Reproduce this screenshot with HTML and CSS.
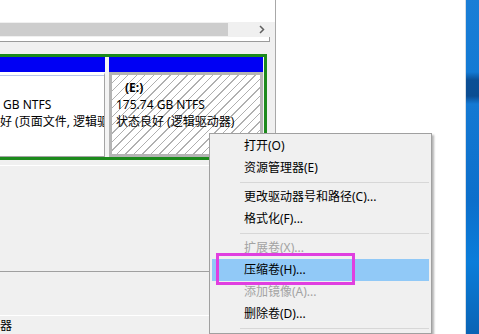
FILE: index.html
```html
<!DOCTYPE html>
<html lang="zh-CN">

<head>
    <meta charset="UTF-8">
    <title>磁盘管理</title>
    <link rel="stylesheet" href="styles.css">
</head>

<body>

    <div class="screen">
        <div class="window">
            <div class="list-area"></div>
            <div class="hscroll">
                <div class="thumb"></div>
                <svg class="arrow" width="6" height="9" viewBox="0 0 6 9">
                    <path d="M1 1 L4.5 4.5 L1 8" fill="none" stroke="#606060" stroke-width="1.5" />
                </svg>
            </div>
            <div class="pane-edge"></div>

            <div class="disk-row">
                <div class="extended">
                    <div class="part part-left">
                        <div class="part-head"></div>
                        <div class="part-body plain">
                            <p>&nbsp;</p>
                            <p class="shift">GB NTFS</p>
                            <p>好 (页面文件, 逻辑驱</p>
                        </div>
                    </div>
                    <div class="part part-right">
                        <div class="part-head"></div>
                        <div class="part-body hatched">
                            <p class="label">(E:)</p>
                            <p>175.74 GB NTFS</p>
                            <p>状态良好 (逻辑驱动器)</p>
                        </div>
                    </div>
                </div>
            </div>
            <div class="legend-top"></div>
            <div class="legend"></div>
            <div class="status">器</div>
        </div>
        <div class="blank"></div>
        <div class="desktop"></div>
    </div>

    <ul class="context-menu">
        <li class="item">打开(O)</li>
        <li class="item">资源管理器(E)</li>
        <li class="sep"></li>
        <li class="item">更改驱动器号和路径(C)...</li>
        <li class="item">格式化(F)...</li>
        <li class="sep"></li>
        <li class="item disabled">扩展卷(X)...</li>
        <li class="item hot">压缩卷(H)...</li>
        <li class="item disabled">添加镜像(A)...</li>
        <li class="item">删除卷(D)...</li>
        <li class="sep"></li>
    </ul>

    <div class="mark"></div>

</body>

</html>
```

FILE: styles.css
```css
body {
    margin: 0;
    width: 479px;
    height: 334px;
    overflow: hidden;
    position: relative;
    background: #fff;
    font: 12px/17px "Noto Sans", "Noto Sans CJK SC", sans-serif;
    color: #000;
}

p {
    margin: 0;
    white-space: nowrap;
}

.screen {
    display: flex;
    height: 334px;
}

/* disk management window */
.window {
    width: 276px;
    flex: none;
    box-sizing: border-box;
    border-right: 1px solid #a8a8a8;
    background: #f0f0f0;
    display: flex;
    flex-direction: column;
}

.list-area {
    height: 22px;
    background: #fff;
}

.hscroll {
    width: 270px;
    height: 15px;
    display: flex;
    align-items: center;
    background: #f0f0f0;
}

.thumb {
    width: 228px;
    height: 13px;
    background: #cdcdcd;
}

.arrow {
    margin-left: auto;
    margin-right: 5px;
}

.pane-edge {
    width: 270px;
    height: 5px;
    box-sizing: border-box;
    background: #fff;
    border-bottom: 1px solid #9a9a9a;
    border-right: 1px solid #9a9a9a;
}

.disk-row {
    padding: 12px 0 5px;
    border-bottom: 1px solid #fff;
}

.extended {
    display: flex;
    gap: 4px;
    width: 267px;
    height: 106px;
    box-sizing: border-box;
    border: 3px solid #1c8a1c;
    border-left: 0;
    padding-right: 1px;
    background: #f4f4f4;
}

.part {
    display: flex;
    flex-direction: column;
    overflow: hidden;
}

.part-left {
    width: 105px;
}

.part-right {
    width: 154px;
}

.part-head {
    height: 15px;
    background: #0000f4;
}

.part-body {
    flex: 1;
    overflow: hidden;
}

.plain {
    background: #fff;
    border-top: 3px solid #fff;
    border-right: 1px solid #a4a4a4;
    border-bottom: 1px solid #a4a4a4;
    box-shadow: inset 0 1px 0 #b9c6ea;
    padding-top: 4px;
}

.shift {
    padding-left: 3px;
}

.hatched {
    border: 3px solid #b4b4b4;
    padding: 4px 0 0 4px;
    background: repeating-linear-gradient(135deg, #fff 0 5px, #b0b0b0 5px 6px);
}

.label {
    font-weight: bold;
    padding-left: 9px;
}

.legend-top {
    height: 107px;
    border-bottom: 1px solid #a0a0a0;
}

.legend {
    height: 43px;
    border-bottom: 1px solid #fff;
}

.status {
    padding-top: 1px;
}

.blank {
    flex: 1;
    box-sizing: border-box;
    border-right: 1px solid #d6dce3;
}

.desktop {
    width: 13px;
    flex: none;
    background: linear-gradient(to bottom, #1a7ed6 0, #137ad4 72px, #0b4f95 80px, #0b4d92 96px, #1479d3 104px, #0c6fcb 200px, #0a7dda 262px, #0a63b4 334px);
}

/* context menu */
.context-menu {
    position: absolute;
    left: 209px;
    top: 133px;
    width: 223px;
    box-sizing: border-box;
    margin: 0;
    padding: 1px 2px;
    list-style: none;
    background: #f0f0f0;
    border: 1px solid #a0a0a0;
    box-shadow: 2px 2px 2px rgba(0, 0, 0, 0.3);
}

.item {
    height: 22px;
    line-height: 22px;
    padding-left: 32px;
    white-space: nowrap;
}

.disabled {
    color: #a3a3a3;
}

.hot {
    background: #91c9f7;
}

.sep {
    height: 3px;
    margin: 0 0 3px 28px;
    border-bottom: 1px solid #d7d7d7;
}

.mark {
    position: absolute;
    left: 216px;
    top: 253px;
    width: 139px;
    height: 32px;
    box-sizing: border-box;
    border: 3px solid #e03fe0;
}
```
